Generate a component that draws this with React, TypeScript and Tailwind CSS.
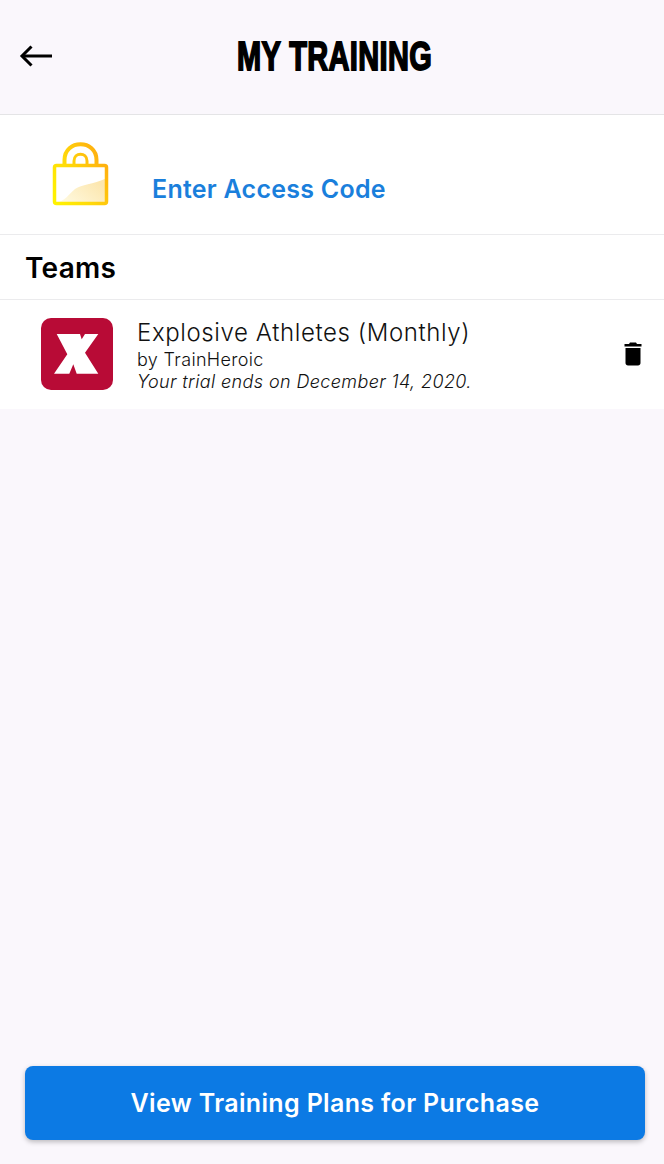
import React from "react";

function LockIcon() {
  return (
    <svg width="58" height="64" viewBox="0 0 58 64" fill="none">
      <defs>
        <linearGradient id="lockStroke" gradientUnits="userSpaceOnUse" x1="4" y1="60" x2="56" y2="30">
          <stop offset="0" stopColor="#fff200" />
          <stop offset="0.5" stopColor="#ffd80a" />
          <stop offset="1" stopColor="#ffb20f" />
        </linearGradient>
        <linearGradient id="lockFill" x1="0" y1="1" x2="1" y2="0.4">
          <stop offset="0" stopColor="#fffce6" />
          <stop offset="1" stopColor="#fce6ae" />
        </linearGradient>
      </defs>
      <path d="M4 61 C13 59 17 52 23 47 C30 42 40 43 55 36 V62 H4 Z" fill="url(#lockFill)" />
      <rect x="2.5" y="23.5" width="52" height="38" rx="2" stroke="url(#lockStroke)" strokeWidth="3.5" />
      <path d="M12.5 23 V18 C12.5 -3 44.5 -3 44.5 18 V23" stroke="url(#lockStroke)" strokeWidth="4" />
      <path d="M22 23 V19 C22 10 35 10 35 19 V23" stroke="url(#lockStroke)" strokeWidth="3" />
    </svg>
  );
}

function TeamLogo() {
  return (
    <div className="flex h-[72px] w-[72px] shrink-0 items-center justify-center rounded-[10px] bg-[#b80b36]">
      <svg width="46" height="40" viewBox="0 0 46 40">
        <path
          d="M2.7 0 H26 L27.7 5.3 L31 0 H44.3 L31 18.7 L44.3 39.7 H22.7 L19.3 30.3 L15.3 39.7 H0 L13.3 20.3 Z"
          fill="#ffffff"
        />
      </svg>
    </div>
  );
}

function TrashIcon() {
  return (
    <svg width="18" height="24" viewBox="0 0 18 24" fill="#000000">
      <path d="M6 0.5 H12 L13 2 H17.5 V4.5 H0.5 V2 H5 Z" />
      <path d="M1.5 6 H16.5 V21 C16.5 22.6 15.4 23.5 14 23.5 H4 C2.6 23.5 1.5 22.6 1.5 21 Z" />
    </svg>
  );
}

export default function App() {
  return (
    <div className="flex h-[1164px] w-[664px] flex-col overflow-hidden bg-[#faf7fc] font-['Inter','Liberation_Sans',sans-serif] text-black">
      <header className="relative flex h-[115px] shrink-0 items-center justify-center border-b border-[#e4e4e6]">
        <svg className="absolute left-[19px] top-[44px]" width="34" height="24" viewBox="0 0 34 24" fill="none" stroke="#000000" strokeWidth="3">
          <path d="M33 12 H3" />
          <path d="M12.5 2.5 L3 12 L12.5 21.5" />
        </svg>
        <h1 className="ml-[5px] mb-[2px] origin-center scale-x-[0.725] font-['Liberation_Sans',sans-serif] text-[40px] leading-none font-bold tracking-[0.5px] whitespace-nowrap [-webkit-text-stroke:1.8px_#000]">
          MY TRAINING
        </h1>
      </header>

      <section className="flex h-[120px] shrink-0 border-b border-[#ebebed] bg-white pl-[52px]">
        <div className="mt-[27px]">
          <LockIcon />
        </div>
        <span className="mt-[58px] ml-[42px] text-[25px] leading-[32px] font-semibold tracking-[0.25px] text-[#1a7fdc]">Enter Access Code</span>
      </section>

      <section className="flex h-[65px] shrink-0 items-center border-b border-[#ebebed] bg-white pl-[25px]">
        <h2 className="mt-[2px] text-[28px] leading-none font-semibold tracking-[0.3px]">Teams</h2>
      </section>

      <section className="flex h-[109px] shrink-0 items-start bg-white pt-[18px] pl-[41px] pr-[22px]">
        <TeamLogo />
        <div className="ml-[24px] flex flex-1 flex-col font-[350] text-[#111111]">
          <span className="text-[24px] leading-[30px] tracking-[0.6px]">Explosive Athletes (Monthly)</span>
          <span className="mt-[1px] text-[18px] leading-[22px] tracking-[0.34px]">by TrainHeroic</span>
          <span className="text-[18px] leading-[22px] tracking-[0.38px] italic">Your trial ends on December 14, 2020.</span>
        </div>
        <div className="mt-[24px]">
          <TrashIcon />
        </div>
      </section>

      <div className="mt-auto pb-[24px] pl-[25px]">
        <button className="flex h-[74px] w-[620px] items-center justify-center rounded-[8px] bg-[#0c7ae4] pt-[2px] text-[25px] font-semibold tracking-[0.35px] text-white shadow-[0_2px_5px_rgba(0,0,0,0.25)]">
          View Training Plans for Purchase
        </button>
      </div>
    </div>
  );
}
